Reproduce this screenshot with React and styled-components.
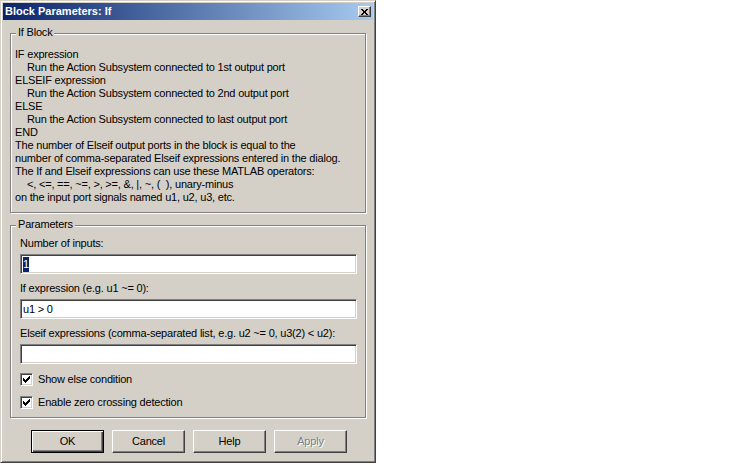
import React from "react";
import styled, { createGlobalStyle } from "styled-components";

const GlobalStyle = createGlobalStyle`
  body {
    margin: 0;
    background: #fff;
  }
  * {
    box-sizing: border-box;
  }
`;

const Window = styled.div`
  width: 376px;
  height: 463px;
  background: #d4d0c8;
  border: 1px solid;
  border-color: #d4d0c8 #404040 #404040 #d4d0c8;
  box-shadow: inset 1px 1px #fff, inset -1px -1px #808080;
  padding: 2px;
  display: flex;
  flex-direction: column;
  font-family: "Liberation Sans", Arial, sans-serif;
  font-size: 11px;
  line-height: 13px;
  letter-spacing: -0.2px;
  color: #000;
`;

const TitleBar = styled.div`
  height: 17px;
  flex: none;
  display: flex;
  align-items: center;
  justify-content: space-between;
  padding: 0 2px 0 2px;
  background: linear-gradient(to right, #0a246a, #a6caf0);
  color: #fff;
  font-weight: bold;
  letter-spacing: 0;
`;

const CloseButton = styled.div`
  width: 13px;
  height: 11px;
  display: flex;
  align-items: center;
  justify-content: center;
  background: #d4d0c8;
  border: 1px solid;
  border-color: #fff #404040 #404040 #fff;
  box-shadow: inset -1px -1px #808080;
`;

const Body = styled.div`
  flex: 1;
  display: flex;
  flex-direction: column;
  padding: 13px 7px 0 7px;
`;

const Group = styled.div`
  position: relative;
  height: ${(p) => p.$h}px;
  margin-top: ${(p) => p.$mt || 0}px;
  border: 1px solid #808080;
  box-shadow: inset 1px 1px #fff, 1px 1px #fff;
  padding: ${(p) => p.$pad};
`;

const Legend = styled.div`
  position: absolute;
  top: -8px;
  left: 5px;
  padding: 0 2px;
  background: #d4d0c8;
`;

const Line = styled.div`
  white-space: pre;
  padding-left: ${(p) => (p.$indent ? 12 : 0)}px;
`;

const FieldLabel = styled.div`
  height: 13px;
  margin-bottom: 4px;
  white-space: nowrap;
`;

const Field = styled.div`
  height: 20px;
  margin-bottom: ${(p) => p.$mb}px;
  background: #fff;
  border: 1px solid;
  border-color: #808080 #fff #fff #808080;
  box-shadow: inset 1px 1px #404040, inset -1px -1px #d4d0c8;
  padding: 1px 1px 0 2px;
  line-height: 16px;
  white-space: nowrap;
`;

const Selected = styled.span`
  display: inline-block;
  background: #0a246a;
  color: #fff;
  line-height: 15px;
`;

const CheckRow = styled.div`
  display: flex;
  align-items: center;
  height: 13px;
  margin-bottom: 10px;
`;

const CheckBox = styled.div`
  width: 13px;
  height: 13px;
  flex: none;
  background: #fff;
  border: 1px solid;
  border-color: #808080 #fff #fff #808080;
  box-shadow: inset 1px 1px #404040, inset -1px -1px #d4d0c8;
  display: flex;
  align-items: center;
  justify-content: center;
  margin-right: 5px;
`;

const ButtonRow = styled.div`
  display: flex;
  justify-content: center;
  gap: 8px;
  margin-top: 12px;
  padding-left: 2px;
`;

const Button = styled.div`
  width: 73px;
  height: 23px;
  display: flex;
  align-items: center;
  justify-content: center;
  background: #d4d0c8;
  border: 1px solid;
  border-color: ${(p) => (p.$default ? "#000" : "#fff #404040 #404040 #fff")};
  box-shadow: ${(p) =>
    p.$default
      ? "inset 1px 1px #fff, inset -1px -1px #404040, inset -2px -2px #808080"
      : "inset -1px -1px #808080"};
  color: ${(p) => (p.$disabled ? "#808080" : "#000")};
  text-shadow: ${(p) => (p.$disabled ? "1px 1px #fff" : "none")};
`;

const Check = () => (
  <svg width="7" height="7" viewBox="0 0 7 7" shapeRendering="crispEdges">
    <g fill="#000">
      <rect x="6" y="0" width="1" height="1" />
      <rect x="5" y="1" width="2" height="1" />
      <rect x="0" y="2" width="1" height="1" />
      <rect x="4" y="2" width="3" height="1" />
      <rect x="0" y="3" width="2" height="1" />
      <rect x="3" y="3" width="3" height="1" />
      <rect x="0" y="4" width="5" height="1" />
      <rect x="1" y="5" width="3" height="1" />
      <rect x="2" y="6" width="1" height="1" />
    </g>
  </svg>
);

const CloseGlyph = () => (
  <svg width="7" height="6" viewBox="0 0 7 6" shapeRendering="crispEdges">
    <g fill="#000">
      <rect x="0" y="0" width="2" height="1" />
      <rect x="5" y="0" width="2" height="1" />
      <rect x="1" y="1" width="2" height="1" />
      <rect x="4" y="1" width="2" height="1" />
      <rect x="2" y="2" width="3" height="2" />
      <rect x="1" y="4" width="2" height="1" />
      <rect x="4" y="4" width="2" height="1" />
      <rect x="0" y="5" width="2" height="1" />
      <rect x="5" y="5" width="2" height="1" />
    </g>
  </svg>
);

const helpLines = [
  ["IF expression"],
  ["Run the Action Subsystem connected to 1st output port", true],
  ["ELSEIF expression"],
  ["Run the Action Subsystem connected to 2nd output port", true],
  ["ELSE"],
  ["Run the Action Subsystem connected to last output port", true],
  ["END"],
  ["The number of Elseif output ports in the block is equal to the"],
  ["number of comma-separated Elseif expressions entered in the dialog."],
  ["The If and Elseif expressions can use these MATLAB operators:"],
  ["<, <=, ==, ~=, >, >=, &, |, ~, (  ), unary-minus", true],
  ["on the input port signals named u1, u2, u3, etc."],
];

export default function App() {
  return (
    <>
      <GlobalStyle />
      <Window>
        <TitleBar>
          <span>Block Parameters: If</span>
          <CloseButton>
            <CloseGlyph />
          </CloseButton>
        </TitleBar>
        <Body>
          <Group $h={180} $pad="14px 4px 0 4px">
            <Legend>If Block</Legend>
            {helpLines.map(([text, indent], i) => (
              <Line key={i} $indent={indent}>
                {text}
              </Line>
            ))}
          </Group>
          <Group $h={193} $mt={12} $pad="11px 8px 0 9px">
            <Legend>Parameters</Legend>
            <FieldLabel>Number of inputs:</FieldLabel>
            <Field $mb={8}>
              <Selected>1</Selected>
            </Field>
            <FieldLabel>If expression (e.g. u1 ~= 0):</FieldLabel>
            <Field $mb={8}>u1 &gt; 0</Field>
            <FieldLabel>
              Elseif expressions (comma-separated list, e.g. u2 ~= 0, u3(2) &lt; u2):
            </FieldLabel>
            <Field $mb={9} />
            <CheckRow>
              <CheckBox>
                <Check />
              </CheckBox>
              Show else condition
            </CheckRow>
            <CheckRow>
              <CheckBox>
                <Check />
              </CheckBox>
              Enable zero crossing detection
            </CheckRow>
          </Group>
          <ButtonRow>
            <Button $default>OK</Button>
            <Button>Cancel</Button>
            <Button>Help</Button>
            <Button $disabled>Apply</Button>
          </ButtonRow>
        </Body>
      </Window>
    </>
  );
}
